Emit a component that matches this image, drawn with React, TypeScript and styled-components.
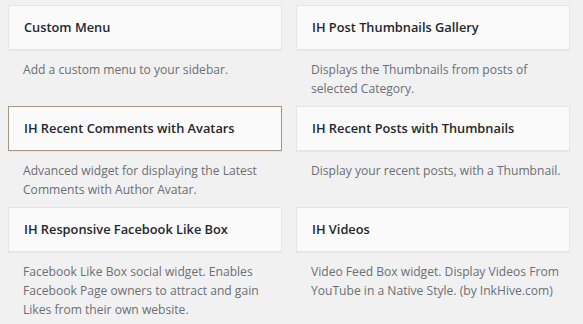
import React from 'react'
import styled, { createGlobalStyle } from 'styled-components'

const GlobalStyle = createGlobalStyle`
    html, body {
        margin: 0;
        padding: 0;
        background: #f1f1f1;
    }
    body {
        font-family: "Open Sans", "DejaVu Sans", sans-serif;
        font-size: 13px;
        color: #444;
    }
`

const WidgetGrid = styled.div`
    display: grid;
    grid-template-columns: 274px 274px;
    column-gap: 14px;
    padding: 5px 0 0 8px;
`

const Widget = styled.div`
    display: flex;
    flex-direction: column;
`

const WidgetTop = styled.div<{ $active?: boolean }>`
    background: #fafafa;
    border: 1px solid ${p => (p.$active ? '#a69785' : '#e5e5e5')};
    box-shadow: 0 1px 1px rgba(0, 0, 0, 0.04);
`

const WidgetTitle = styled.h3`
    margin: 0;
    padding: 15px;
    font-size: 12.8px;
    font-weight: 600;
    line-height: 13px;
    color: #23282d;
    white-space: nowrap;
`

const WidgetDescription = styled.div`
    padding: 10px 8px 8px 15px;
    font-size: 12.1px;
    line-height: 19px;
    color: #6b6f74;
`

const widgets = [
    { title: 'Custom Menu', text: 'Add a custom menu to your sidebar.' },
    { title: 'IH Post Thumbnails Gallery', text: 'Displays the Thumbnails from posts of selected Category.' },
    { title: 'IH Recent Comments with Avatars', text: 'Advanced widget for displaying the Latest Comments with Author Avatar.', active: true },
    { title: 'IH Recent Posts with Thumbnails', text: 'Display your recent posts, with a Thumbnail.' },
    { title: 'IH Responsive Facebook Like Box', text: 'Facebook Like Box social widget. Enables Facebook Page owners to attract and gain Likes from their own website.' },
    { title: 'IH Videos', text: 'Video Feed Box widget. Display Videos From YouTube in a Native Style. (by InkHive.com)' },
]

const App: React.FunctionComponent = () => {
    return (
        <>
        <GlobalStyle />
        <WidgetGrid>
            {widgets.map(w => (
                <Widget key={w.title}>
                    <WidgetTop $active={w.active}>
                        <WidgetTitle>{w.title}</WidgetTitle>
                    </WidgetTop>
                    <WidgetDescription>{w.text}</WidgetDescription>
                </Widget>
            ))}
        </WidgetGrid>
        </>
    )
}

export default App
